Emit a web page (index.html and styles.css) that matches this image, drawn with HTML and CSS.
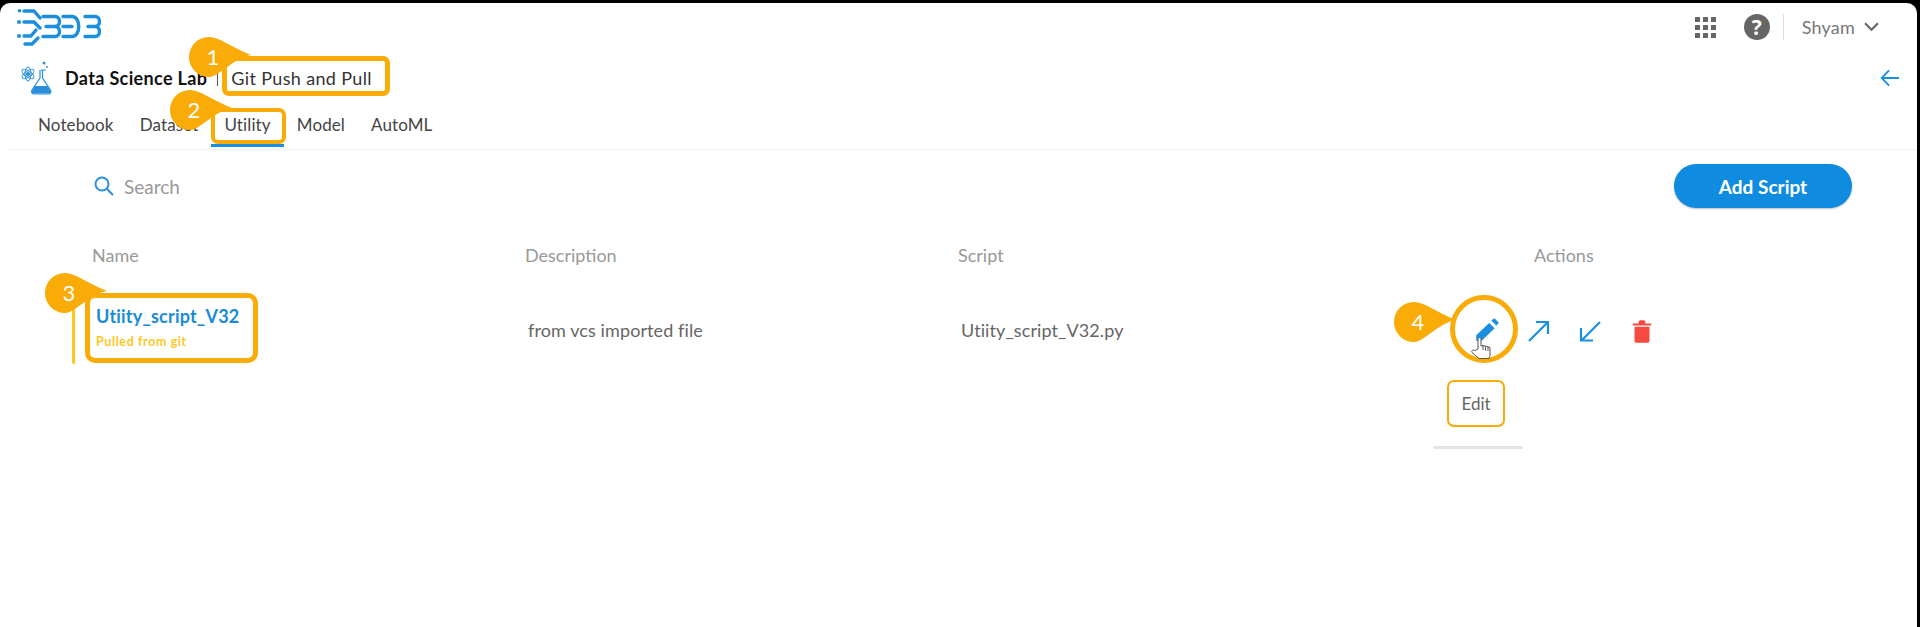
FILE: index.html
```html
<!DOCTYPE html>
<html lang="en">
<head>
<meta charset="utf-8">
<title>Data Science Lab</title>
<link rel="stylesheet" href="styles.css">
</head>
<body>
<div class="panel">
  <header class="topbar">
    <svg class="logo" viewBox="0 0 84 38" fill="none" stroke="#1a8fe0" stroke-width="3.400" stroke-linecap="round" stroke-linejoin="round">
      <circle cx="2.500" cy="1.800" r="1.800" fill="#1a8fe0" stroke="none"/>
      <circle cx="2" cy="13" r="2" fill="#1a8fe0" stroke="none"/>
      <circle cx="2" cy="27" r="2" fill="#1a8fe0" stroke="none"/>
      <path d="M7 2h10l6 7M7 13h10l6 6M7 27h7l5-6M8 35h7l6-6"/>
      <path d="M26 7.500h12c6 0 6 10 0 10h-9h9c6 0 6 10 0 10H26"/>
      <path d="M46 7.500h9c9 0 9 20 0 20h-9M46 17.500h9"/>
      <path d="M68 7.500h10c6 0 6 10 0 10h-7h7c6 0 6 10 0 10H68"/>
    </svg>
    <div class="top-tools">
      <svg class="apps" viewBox="0 0 21 21" fill="#666">
        <rect width="5" height="5"/><rect x="8" width="5" height="5"/><rect x="16" width="5" height="5"/>
        <rect y="8" width="5" height="5"/><rect x="8" y="8" width="5" height="5"/><rect x="16" y="8" width="5" height="5"/>
        <rect y="16" width="5" height="5"/><rect x="8" y="16" width="5" height="5"/><rect x="16" y="16" width="5" height="5"/>
      </svg>
      <span class="help">?</span>
      <span class="divider"></span>
      <span class="user">Shyam</span>
      <svg class="chev" viewBox="0 0 14 9" fill="none" stroke="#666" stroke-width="2"><path d="M1 1l6 6 6-6"/></svg>
    </div>
  </header>

  <div class="titlebar">
    <svg class="lab-icon" viewBox="0 0 34 34" fill="none" stroke="#2a8fdc" stroke-width="1">
      <ellipse cx="8" cy="13" rx="7" ry="3" transform="rotate(35 8 13)"/>
      <ellipse cx="8" cy="13" rx="7" ry="3" transform="rotate(-35 8 13)"/>
      <ellipse cx="8" cy="13" rx="3" ry="7"/>
      <circle cx="8" cy="13" r="1.600" fill="#2a8fdc"/>
      <path d="M21 9h5M22.500 9v8l8 12c1 2 0 4-2 4H14c-2 0-3-2-2-4l8-12V9" stroke-width="1.200"/>
      <path d="M14.500 25h13l3 5c0 2-1 2.500-2 2.500H14c-2 0-2.500-1.500-2-2.500z" fill="#2a8fdc" stroke="none"/>
      <circle cx="24" cy="2" r="1.500" fill="#2a8fdc" stroke="none"/>
      <circle cx="27" cy="6" r="1" fill="#2a8fdc" stroke="none"/>
    </svg>
    <span class="lab-name">Data Science Lab</span>
    <span class="title-sep"></span>
    <span class="page-name">Git Push and Pull</span>
    <svg class="back" viewBox="0 0 22 20" fill="none" stroke="#1a8fe0" stroke-width="2"><path d="M21 10H2M10 1.500L1.800 10l8.200 8.500"/></svg>
  </div>

  <nav class="tabs">
    <span class="tab">Notebook</span>
    <span class="tab">Dataset</span>
    <span class="tab tab-active">Utility</span>
    <span class="tab">Model</span>
    <span class="tab">AutoML</span>
  </nav>

  <div class="toolbar">
    <div class="search">
      <svg class="search-icon" viewBox="0 0 20 20" fill="none" stroke="#2a8fdc" stroke-width="2"><circle cx="8" cy="8" r="6.500"/><path d="M13 13l6 6"/></svg>
      <span>Search</span>
    </div>
    <button class="add-btn">Add Script</button>
  </div>

  <section class="table">
    <div class="thead">
      <span>Name</span>
      <span>Description</span>
      <span>Script</span>
      <span class="th-actions">Actions</span>
    </div>
    <div class="trow">
      <div class="name-cell">
        <span class="script-name">Utiity_script_V32</span>
        <span class="script-tag">Pulled from git</span>
      </div>
      <span class="cell">from vcs imported file</span>
      <span class="cell">Utiity_script_V32.py</span>
      <div class="actions">
        <svg class="act-edit" viewBox="0 0 24 24" fill="#1a8fe0"><path d="M3 21v-5L15 4.500l5 5L8 21z"/><path d="M17 2.500l1.500-1.500a1.400 1.400 0 0 1 2 0l2.500 2.500a1.400 1.400 0 0 1 0 2L21.500 7z"/></svg>
        <svg class="act" viewBox="0 0 24 24" fill="none" stroke="#1a8fe0" stroke-width="2.200"><path d="M3 22L21.500 3.500M10 3h12v12"/></svg>
        <svg class="act act-in" viewBox="0 0 24 24" fill="none" stroke="#1a8fe0" stroke-width="2.200"><path d="M22 3L3.500 21.500M3 9v12.500h12"/></svg>
        <svg class="act-trash" viewBox="0 0 24 28" fill="#f44a3f"><path d="M1 5h22v2.500H1zM8 3c0-1 1-2 2-2h4c1 0 2 1 2 2v2H8zM3 9h18v17c0 1-1 2-2 2H5c-1 0-2-1-2-2z"/></svg>
      </div>
    </div>
  </section>

  <div class="mark mark-title"></div>
  <div class="mark mark-tab"></div>
  <div class="mark mark-name"></div>
  <div class="mark-ring"></div>
  <svg class="cursor" viewBox="0 0 22 24" fill="#fff" stroke="#555" stroke-width="1"><path d="M8 13V3c0-2 3-2 3 0v7l2-.5 2 .5 2 .5 3 1v8l-1 3H9l-7-6c-1-2 1-3 3-2z"/><path d="M13 10v4M15.500 10.500v4M18 11v4" fill="none"/></svg>
  <div class="tooltip">Edit</div>
  <div class="tooltip-shadow"></div>

  <div class="pin pin-1"><svg viewBox="0 0 62 40"><path d="M20 0C30 0 44 11 62 18C44 21 30 40 20 40A20 20 0 0 1 20 0Z"/></svg><span>1</span></div>
  <div class="pin pin-2"><svg viewBox="0 0 62 40"><path d="M20 0C30 0 44 11 62 18C44 21 30 40 20 40A20 20 0 0 1 20 0Z"/></svg><span>2</span></div>
  <div class="pin pin-3"><svg viewBox="0 0 62 40"><path d="M20 0C30 0 44 11 62 18C44 21 30 40 20 40A20 20 0 0 1 20 0Z"/></svg><span>3</span></div>
  <div class="pin pin-4"><svg viewBox="0 0 62 40"><path d="M20 0C30 0 44 11 62 18C44 21 30 40 20 40A20 20 0 0 1 20 0Z"/></svg><span>4</span></div>
</div>
</body>
</html>
```

FILE: styles.css
```css
* { box-sizing: border-box; }
html, body { margin: 0; height: 100%; }
body {
  background: #000;
  font-family: "Lato", "Open Sans", sans-serif;
  overflow: hidden;
}
.panel {
  position: relative;
  margin: 3px 3px 0 0;
  height: 624px;
  background: #fff;
  border-radius: 10px 10px 0 0;
  overflow: hidden;
  color: #555;
}
.topbar {
  height: 56px;
  display: flex;
  align-items: flex-start;
  justify-content: space-between;
  padding: 6px 38px 0 17px;
}
.logo { width: 84px; height: 38px; }
.top-tools { display: flex; align-items: center; margin-top: 5px; }
.apps { width: 21px; height: 21px; margin-right: 28px; }
.help {
  width: 26px; height: 26px; border-radius: 50%;
  background: #666; color: #fff;
  font: bold 21px/26px "Open Sans", sans-serif;
  text-align: center;
  margin-right: 13px;
}
.divider { width: 1px; height: 26px; background: #ddd; margin-right: 18px; }
.user { font-size: 18px; color: #777; letter-spacing: .2px; margin-right: 9px; }
.chev { width: 15px; height: 10px; }

.titlebar {
  height: 37px;
  display: flex;
  align-items: center;
  padding: 0 17px 0 20px;
}
.lab-icon { width: 34px; height: 34px; margin-right: 11px; }
.lab-name { font-size: 18px; font-weight: 700; color: #111; letter-spacing: .35px; margin-right: 10px; }
.title-sep { width: 1px; height: 16px; background: #555; margin-right: 13px; }
.page-name { font-size: 18px; color: #333; flex: 1; letter-spacing: .35px; }
.back { width: 20px; height: 20px; }

.tabs {
  height: 54px;
  display: flex;
  align-items: flex-start;
  margin-left: 10px;
  padding: 4px 0 0 15px;
  border-bottom: 1px solid #f3f3f3;
}
.tab {
  height: 47px;
  padding: 15px 13px 0;
  font-size: 17px;
  line-height: 20px;
  color: #444;
  letter-spacing: .12px;
}
.tab-active { border-bottom: 3px solid #1a8fe0; }

.toolbar {
  display: flex;
  justify-content: space-between;
  align-items: center;
  height: 44px;
  margin-top: 14px;
  padding: 0 65px 0 94px;
}
.search { display: flex; align-items: center; gap: 10px; font-size: 19px; color: #999; }
.search-icon { width: 20px; height: 20px; }
.add-btn {
  width: 178px; height: 44px;
  border: 0; border-radius: 22px;
  background: #0f8be0;
  color: #fff;
  font: 700 19px "Lato", sans-serif;
  box-shadow: 0 1px 2px rgba(0,0,0,.25);
}

.table { margin: 36px 0 0 72px; }
.thead {
  display: grid;
  grid-template-columns: 433px 433px 514px 1fr;
  height: 22px;
  padding-left: 20px;
  font-size: 18px;
  color: #999;
  line-height: 22px;
}
.th-actions { padding-left: 62px; }
.trow {
  display: grid;
  margin-top: 34px;
  height: 64px;
  align-items: start;
  grid-template-columns: 456px 433px 512px 1fr;
}
.name-cell {
  height: 64px;
  border-left: 3px solid #ffc81e;
  border-radius: 2px;
  padding-left: 21px;
  display: flex;
  flex-direction: column;
}
.script-name { font-size: 18px; font-weight: 700; color: #1a8bd8; margin-top: 4px; line-height: 24px; letter-spacing: .2px; }
.script-tag { font-size: 12.500px; font-weight: 700; color: #ffc81e; margin-top: 7px; line-height: 14px; letter-spacing: .6px; }
.cell { font-size: 18px; line-height: 22px; color: #666; padding-top: 19px; letter-spacing: .1px; }
.actions { display: flex; align-items: center; gap: 27px; padding-top: 18px; }
.act { width: 24px; height: 24px; }
.act-in { margin-left: 1px; }
.act-edit { width: 26px; height: 26px; }
.act-trash { width: 20px; height: 24px; margin-left: 3px; }

.mark {
  position: absolute;
  border: 5px solid #f9ab07;
  border-radius: 7px;
}
.mark-title { left: 222px; top: 53px; width: 168px; height: 40px; }
.mark-tab { left: 211px; top: 105px; width: 75px; height: 36px; border-width: 4px; }
.mark-name { left: 85px; top: 290px; width: 173px; height: 70px; border-radius: 10px; }
.mark-ring {
  position: absolute;
  left: 1450px; top: 292px;
  width: 68px; height: 68px;
  border: 5px solid #f9ab07;
  border-radius: 50%;
}
.cursor { position: absolute; left: 1470px; top: 333px; width: 22px; height: 24px; }
.tooltip {
  position: absolute;
  left: 1447px; top: 377px;
  width: 58px; height: 47px;
  border: 2px solid #f9ab07;
  border-radius: 7px;
  background: #fff;
  text-align: center;
  line-height: 43px;
  font-size: 17px;
  color: #666;
}
.tooltip-shadow {
  position: absolute;
  left: 1433px; top: 443px;
  width: 90px; height: 3px;
  background: #e4e4e4;
  border-radius: 2px;
  filter: blur(.6px);
}
.pin {
  position: absolute;
  width: 62px; height: 40px;
  color: #fff;
  font-size: 22px;
}
.pin svg { position: absolute; inset: 0; width: 62px; height: 40px; fill: #f9ab07; }
.pin span { position: absolute; left: 4px; top: 0; width: 40px; text-align: center; line-height: 40px; }
.pin-1 { left: 189px; top: 34px; }
.pin-2 { left: 170px; top: 87px; }
.pin-3 { left: 45px; top: 270px; }
.pin-4 { left: 1394px; top: 299px; }
```
